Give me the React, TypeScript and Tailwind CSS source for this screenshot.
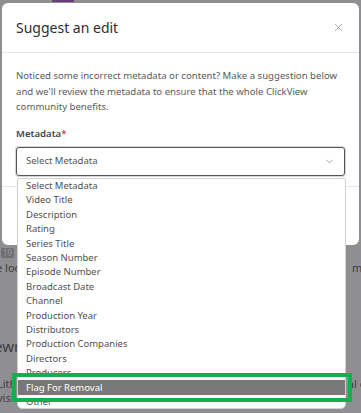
import { X, ChevronDown } from 'lucide-react'

const options = [
  'Select Metadata',
  'Video Title',
  'Description',
  'Rating',
  'Series Title',
  'Season Number',
  'Episode Number',
  'Broadcast Date',
  'Channel',
  'Production Year',
  'Distributors',
  'Production Companies',
  'Directors',
  'Producers',
  'Flag For Removal',
  'Other',
]

const font = { fontFamily: '"Noto Sans", "Open Sans", sans-serif' }

const App = () => {
  return (
    <div className="relative w-[361px] h-[413px] overflow-hidden bg-[#8f8f92]" style={font}>

      {/* dimmed page behind the modal */}
      <div className="flex flex-col pt-[247px] text-[#3b3b3f]">
        <div className="flex items-center h-[12px] pl-[1px]">
          <span className="px-[2px] text-[8px] leading-[10px] bg-[#6f6f73] text-[#9a9a9e] rounded-[2px]">19</span>
        </div>
        <div className="flex justify-between h-[18px] items-center -ml-[4px] -mr-[4px] text-[11px]">
          <span>e look</span>
          <span>mi</span>
        </div>
        <div className="flex flex-col mt-[62px] -ml-[6px] text-[15px] leading-[15px]">
          <span>ewr</span>
          <span>l</span>
        </div>
        <div className="flex justify-between mt-[8px] -ml-[3px] -mr-[4px] text-[11px] leading-[14px]">
          <span>Lith</span>
          <span>al c</span>
        </div>
        <div className="-ml-[3px] text-[11px] leading-[14px]">visi</div>
      </div>

      <div className="absolute left-[52px] top-0 w-[22px] h-[2px] bg-[#6b3d7a]" />

      {/* modal */}
      <div className="absolute left-[2px] top-[3px] w-[357px] h-[242px] bg-white rounded-[6px] flex flex-col">
        <div className="flex items-center justify-between h-[50px] pl-[14px] pr-[14px] border-b border-[#e6e6e6]">
          <span className="text-[14px] text-[#2e2e2e]">Suggest an edit</span>
          <X size={13} strokeWidth={1.3} className="text-[#8a8a8a]" />
        </div>
        <div className="flex flex-col px-[14px] pt-[15px]">
          <p className="text-[9.6px] leading-[15.5px] text-[#5a5a5a]">
            Noticed some incorrect metadata or content? Make a suggestion below and we'll review the metadata to ensure that the whole ClickView community benefits.
          </p>
          <div className="mt-[12px] text-[9.6px] leading-[14px] font-semibold text-[#444]">
            Metadata<span className="text-[#d9363e]">*</span>
          </div>
          <div className="mt-[6px] h-[29px] flex items-center justify-between pl-[9px] pr-[9px] border-[1.5px] border-[#555] rounded-[3px] shadow-[0_0_0_1px_#d6d6d6]">
            <span className="text-[9.5px] text-[#555]">Select Metadata</span>
            <ChevronDown size={11} strokeWidth={1.3} className="text-[#666]" />
          </div>
        </div>
        <div className="mt-[10px] border-t border-[#e6e6e6] flex-1" />
      </div>

      {/* open dropdown list */}
      <div className="absolute left-[17px] top-[178px] w-[329px] h-[231px] bg-white rounded-b-[5px] rounded-t-[2px] border border-[#d0d0d0] overflow-hidden flex flex-col">
        {options.map((o) => (
          <div
            key={o}
            className={
              o === 'Flag For Removal'
                ? 'h-[14.4px] shrink-0 flex items-center pl-[8px] bg-[#787878] text-white text-[9.5px]'
                : 'h-[14.4px] shrink-0 flex items-center pl-[8px] text-[#4f4f4f] text-[9.5px]'
            }
          >
            {o}
          </div>
        ))}
      </div>

      {/* annotation box */}
      <div className="absolute left-[12px] top-[373px] w-[340px] h-[29px] border-4 border-[#12b04c]" />
    </div>
  )
}

export default App
